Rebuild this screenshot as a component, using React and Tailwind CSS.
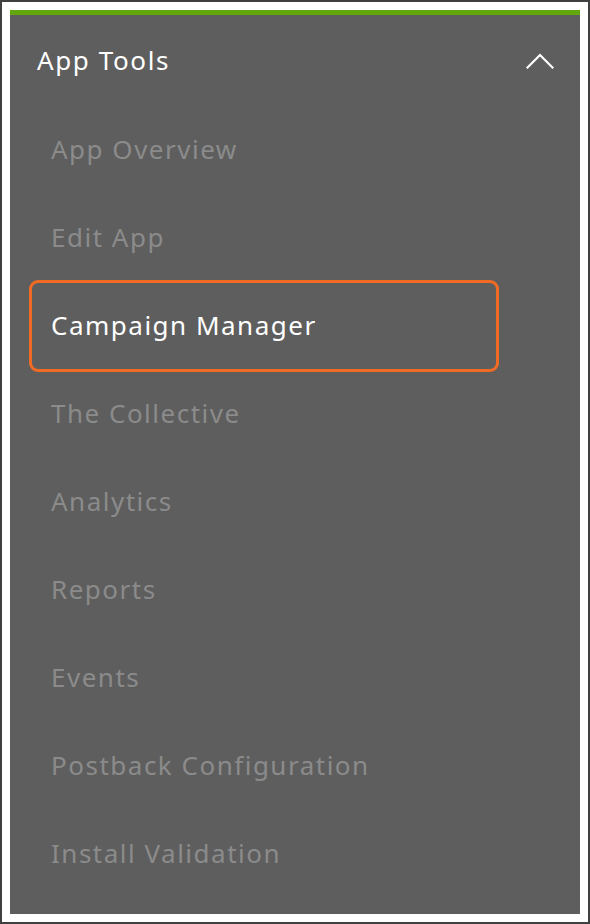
const items = [
  'App Overview',
  'Edit App',
  'Campaign Manager',
  'The Collective',
  'Analytics',
  'Reports',
  'Events',
  'Postback Configuration',
  'Install Validation',
];

const App = () => {
  return (
    <div className="w-[590px] h-[924px] border-2 border-[#404040] bg-white p-2" style={{ fontFamily: '"Noto Sans", "Liberation Sans", sans-serif' }}>
      <div className="h-full flex flex-col bg-[#5e5e5e] border-t-[5px] border-[#63a70f]">
        {/* Header */}
        <div className="h-[91px] flex items-center justify-between pl-[27px] pr-[26px]">
          <span className="text-[26px] leading-none text-white tracking-[1.6px] pb-[1px]">App Tools</span>
          <svg width="28" height="16" viewBox="0 0 28 16" fill="none" className="mt-[1px]">
            <path d="M1.5 14.5 L14 2 L26.5 14.5" stroke="white" strokeWidth="2.2" strokeLinecap="square" />
          </svg>
        </div>

        {/* Menu */}
        <div className="flex flex-col px-[19px]">
          {items.map((item) => {
            const active = item === 'Campaign Manager';
            return active ? (
              <div
                key={item}
                className="w-[470px] h-[92px] -my-[2px] flex items-center pl-[19px] pb-[2px] border-[3px] border-[#f26b24] rounded-[9px] text-[26px] leading-none text-white tracking-[1.5px]"
              >
                {item}
              </div>
            ) : (
              <div key={item} className="w-[470px] h-[88px] flex items-center pl-[22px] pb-[2px] text-[26px] leading-none text-[#8b8b8b] tracking-[1.5px]">
                {item}
              </div>
            );
          })}
        </div>
      </div>
    </div>
  );
};

export default App;
